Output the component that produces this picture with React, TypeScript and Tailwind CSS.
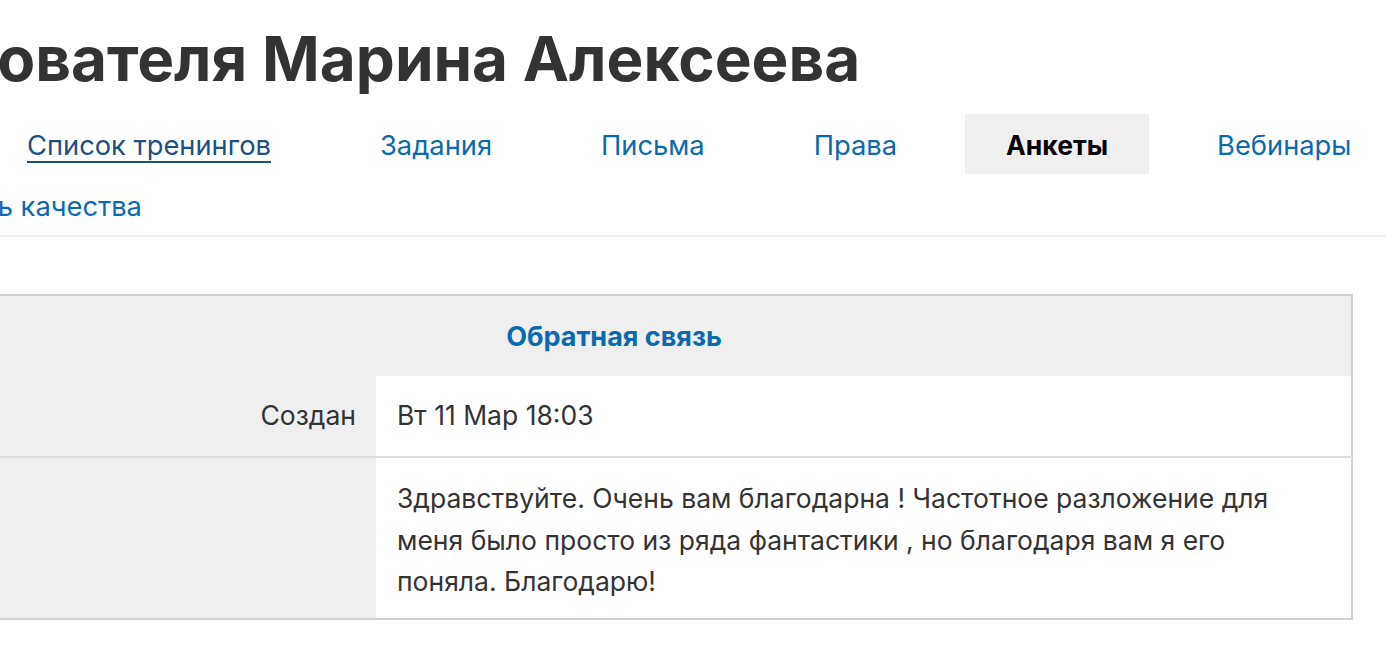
import React from 'react'

const tabs = [
  { label: 'Список тренингов', href: '#trainings', visited: true },
  { label: 'Задания', href: '#tasks' },
  { label: 'Письма', href: '#letters' },
  { label: 'Права', href: '#rights' },
  { label: 'Анкеты', href: '#forms', active: true },
  { label: 'Вебинары', href: '#webinars' },
]

export default function App() {
  return (
    <div className="w-[1386px] h-[654px] overflow-hidden bg-white text-[#333] font-['Inter',_'Roboto',_sans-serif]">
      {/* Page is scrolled sideways, so the left part is off-screen */}
      <div className="ml-[-300px] w-[1720px]">
        <h1 className="ml-[-123px] pt-[22px] whitespace-nowrap text-[62px] leading-[74px] font-bold">
          Анкета пользователя Марина Алексеева
        </h1>

        {/* Tabs */}
        <nav className="mt-[18px] pl-[286px] flex flex-wrap gap-x-[27px] gap-y-[1px] border-b-2 border-[#eeeeee] w-[1720px]">
          {tabs.map((t) =>
            t.active ? (
              <span
                key={t.label}
                className="h-[60px] px-[41px] pt-[4px] flex items-center bg-[#efefef] text-black font-bold text-[26.5px]"
              >
                {t.label}
              </span>
            ) : (
              <a
                key={t.label}
                href={t.href}
                className={`h-[60px] px-[41px] pt-[4px] flex items-center text-[27.3px] ${
                  t.visited ? 'text-[#1d4f7f] underline underline-offset-[6px] decoration-[2px]' : 'text-[#0a69b0]'
                }`}
              >
                {t.label}
              </a>
            )
          )}
          <a href="#quality" className="basis-full flex">
            <span className="ml-[-141px] h-[60px] px-[41px] pt-[4px] flex items-center text-[27.3px] text-[#0a69b0]">
              Контроль качества
            </span>
          </a>
        </nav>

        {/* Feedback table */}
        <table className="mt-[57px] ml-[175px] w-[1478px] border-2 border-[#d0d0d0] border-collapse text-[26.5px]">
          <thead>
            <tr className="bg-[#efefef]">
              <th colSpan={2} className="h-[81px] pt-[3px] text-center font-bold text-[#0a69b0] text-[27px]">
                Обратная связь
              </th>
            </tr>
          </thead>
          <tbody>
            <tr className="border-b-2 border-[#dddddd]">
              <td className="w-[500px] h-[81px] bg-[#efefef] text-right pr-[20px] align-middle">Создан</td>
              <td className="bg-white pl-[21px] align-middle">Вт 11 Мар 18:03</td>
            </tr>
            <tr>
              <td className="bg-[#efefef]"></td>
              <td className="bg-white pl-[21px] pr-[40px] pt-[20px] pb-[15px] leading-[41.5px] align-top">
                Здравствуйте. Очень вам благодарна ! Частотное разложение для
                <br />
                меня было просто из ряда фантастики , но благодаря вам я его
                <br />
                поняла. Благодарю!
              </td>
            </tr>
          </tbody>
        </table>
      </div>
    </div>
  )
}
